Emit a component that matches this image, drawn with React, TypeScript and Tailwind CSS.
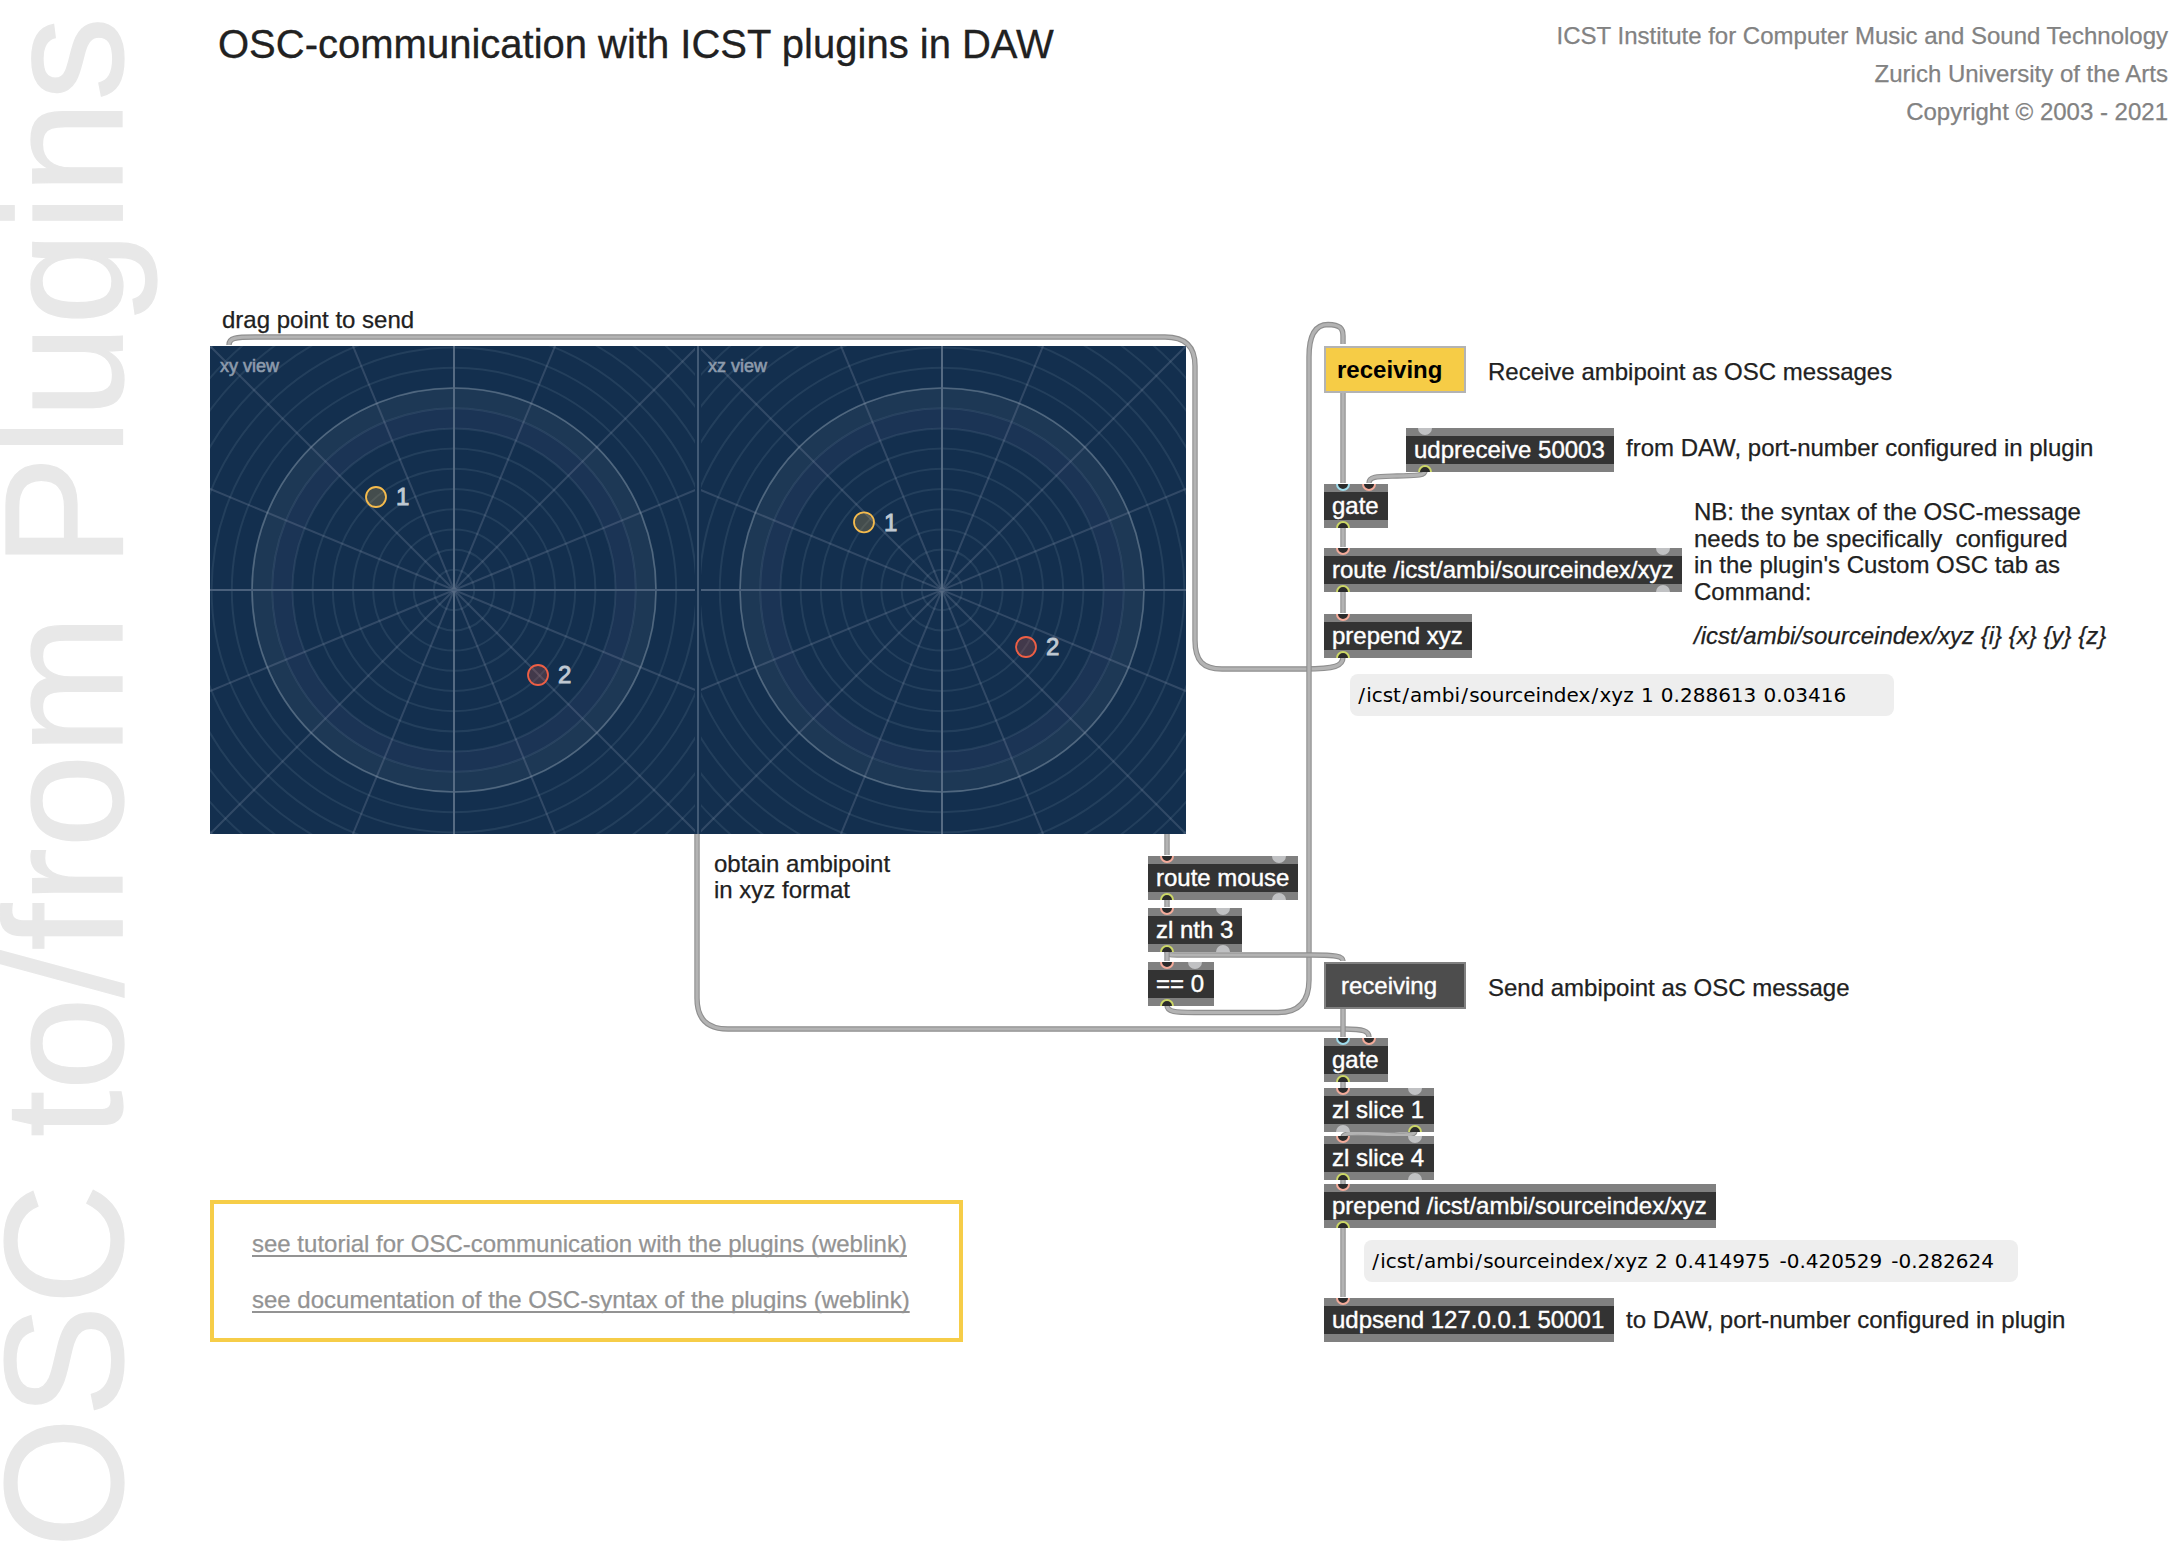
import React from "react";

type Tone = "hot" | "cold" | "out" | "idle";

const toneClass: Record<Tone, string> = {
  hot: "border-[#9fdcec] bg-[#2b2b2b]",
  cold: "border-[#f4ab9a] bg-[#2b2b2b]",
  out: "border-[#ccd766] bg-[#2b2b2b]",
  idle: "border-[#c0c1c3] bg-[#c0c1c3]",
};

function Port({ side, at, tone }: { side: "in" | "out"; at: "first" | "last"; tone: Tone }) {
  return (
    <span
      className={`absolute size-[14px] rounded-full border-2 ${toneClass[tone]} ${
        side === "in" ? "-top-[7px]" : "-bottom-[7px]"
      } ${at === "first" ? "left-[12px]" : "right-[12px]"}`}
    />
  );
}

interface ObjectBoxProps {
  label: string;
  place: string;
  ins?: Tone[];
  outs?: Tone[];
}

function ObjectBox({ label, place, ins = [], outs = [] }: ObjectBoxProps) {
  return (
    <div className={`absolute h-[44px] overflow-hidden bg-[#808080] py-2 ${place}`}>
      <div className="h-[28px] bg-[#333333] pl-[8px] text-[24px] leading-[28px] whitespace-pre text-white [-webkit-text-stroke:0.4px_white]">
        {label}
      </div>
      {ins.map((tone, i) => (
        <Port key={`i${i}`} side="in" at={i === 0 ? "first" : "last"} tone={tone} />
      ))}
      {outs.map((tone, i) => (
        <Port key={`o${i}`} side="out" at={i === 0 ? "first" : "last"} tone={tone} />
      ))}
    </div>
  );
}

function Note({ place, children }: { place: string; children: React.ReactNode }) {
  return (
    <p
      className={`absolute text-[24px] leading-[27px] whitespace-pre text-[#212121] [-webkit-text-stroke:0.25px_#212121] ${place}`}
    >
      {children}
    </p>
  );
}

function Monitor({ place, args }: { place: string; args: string[] }) {
  return (
    <div
      className={`absolute flex h-[42px] items-center rounded-lg bg-[#eeeeee] pl-[7px] font-['DejaVu_Sans',sans-serif] text-[20px] whitespace-pre text-black ${place}`}
    >
      {["icst", "ambi", "sourceindex", "xyz"].map((part) => (
        <React.Fragment key={part}>
          <span className="px-[1.2px]">/</span>
          <span>{part}</span>
        </React.Fragment>
      ))}
      {args.map((arg) => (
        <span key={arg} className={arg.startsWith("-") ? "pl-[2.8px]" : "pl-[0.9px]"}>
          {" " + arg}
        </span>
      ))}
    </div>
  );
}

const cables = [
  "M1343 657 C1343 666 1335 669 1305 669 H1222 C1203 669 1195 661 1195 640 V366 C1195 346 1185 337 1165 337 H255 C235 337 229 338 229 345",
  "M697 834 V998 C697 1019 707 1029 728 1029 H1345 C1363 1029 1369 1031 1369 1037",
  "M1167 1005 C1167 1012 1175 1012.5 1195 1012.5 H1278 C1299 1012.5 1309 1001 1309 980 V357 C1309 334 1316 324.5 1328 324.5 C1340 325 1343 328 1343 336 V344",
  "M1167 951 C1167 955 1170 955 1177 955 H1312 C1335 955 1343 956 1343 961",
  "M1167 951 V961",
  "M1167 834 V855",
  "M1343 392 V483",
  "M1425 471 C1425 476 1415 475.5 1397 476 C1378 476.5 1369 476 1369 483",
  "M1343 527 V547",
  "M1343 591 V613",
  "M1167 899 V907",
  "M1343 1007 V1037",
  "M1343 1081 V1088",
  "M1415 1131 C1415 1136 1405 1135.5 1379 1134 C1353 1132.5 1343 1133 1343 1137",
  "M1343 1179 V1184",
  "M1343 1227 V1297",
];

function Cables() {
  return (
    <svg className="pointer-events-none absolute inset-0" width="2178" height="1568" fill="none">
      {cables.map((d) => (
        <g key={d}>
          <path d={d} stroke="#8f8f8f" strokeWidth="5.4" />
          <path d={d} stroke="#b3b3b3" strokeWidth="3.2" />
        </g>
      ))}
    </svg>
  );
}

interface Source {
  id: number;
  x: number;
  y: number;
  color: string;
}

const rings = Array.from({ length: 17 }, (_, i) => (i + 1) * 20.2);
const spokes = [22.5, 45, 67.5, 112.5, 135, 157.5];

function AmbiView({ cx, left, title, sources }: { cx: number; left: number; title: string; sources: Source[] }) {
  const clip = `clip-${left}`;
  return (
    <g>
      <clipPath id={clip}>
        <rect x={left} y="0" width="485" height="488" />
      </clipPath>
      <g clipPath={`url(#${clip})`}>
        <circle cx={cx} cy="244" r="192" fill="none" stroke="#1d3855" strokeWidth="20.2" />
        <circle cx={cx} cy="244" r="171.7" fill="none" stroke="#1b3455" strokeWidth="20.2" />
        {rings.map((r) => (
          <circle key={r} cx={cx} cy="244" r={r} fill="none" stroke="#a0b4c8" strokeOpacity="0.12" strokeWidth="2" />
        ))}
        {spokes.map((a) => (
          <line
            key={a}
            x1={cx - 360}
            x2={cx + 360}
            y1="244"
            y2="244"
            transform={`rotate(${a} ${cx} 244)`}
            stroke="#a0aac0"
            strokeOpacity="0.22"
            strokeWidth="2"
          />
        ))}
        <circle cx={cx} cy="244" r="202" fill="none" stroke="#8c9db0" strokeOpacity="0.4" strokeWidth="1.6" />
        <line x1={cx} x2={cx} y1="0" y2="488" stroke="#566b83" strokeWidth="2" />
        <line x1={left} x2={left + 485} y1="244" y2="244" stroke="#4a607b" strokeWidth="2" />
      </g>
      <text x={left === 0 ? 10 : 498} y="26" fontSize="18" fill="#8d9bac" stroke="#8d9bac" strokeWidth="0.6">
        {title}
      </text>
      {sources.map((s) => (
        <g key={s.id}>
          <circle cx={s.x} cy={s.y} r="10" fill={s.color} fillOpacity="0.22" stroke={s.color} strokeWidth="1.8" />
          <text x={s.x + 20} y={s.y + 8.4} fontSize="24" fill="#c0c9d3" stroke="#c0c9d3" strokeWidth="0.9">
            {s.id}
          </text>
        </g>
      ))}
    </g>
  );
}

function AmbiMonitor() {
  return (
    <svg
      className="absolute top-[346px] left-[210px] bg-[#132f4e] font-['Liberation_Sans',Arial,sans-serif]"
      width="976"
      height="488"
    >
      <AmbiView
        cx={244}
        left={0}
        title="xy view"
        sources={[
          { id: 1, x: 166, y: 151, color: "#f5bb4d" },
          { id: 2, x: 328, y: 329, color: "#ee5f45" },
        ]}
      />
      <AmbiView
        cx={732}
        left={491}
        title="xz view"
        sources={[
          { id: 1, x: 654, y: 176.3, color: "#f5bb4d" },
          { id: 2, x: 816, y: 301, color: "#ee5f45" },
        ]}
      />
      <line x1="488" x2="488" y1="0" y2="488" stroke="#425a75" strokeWidth="2" />
    </svg>
  );
}

export default function App() {
  return (
    <main className="relative h-[1568px] w-[2178px] overflow-hidden bg-white font-['Liberation_Sans',Arial,sans-serif]">
      <div className="absolute top-[1548px] left-[1px] origin-top-left -rotate-90 text-[168px] leading-[126px] whitespace-nowrap text-[#e8e8e8] [-webkit-text-stroke:1.2px_#e8e8e8]">
        OSC to/from Plugins
      </div>

      <header className="flex items-start justify-between pt-[17px] pr-[10px] pl-[218px]">
        <h1 className="pt-[5px] text-[40px] leading-[45px] text-[#212121] [-webkit-text-stroke:0.3px_#212121]">
          OSC-communication with ICST plugins in DAW
        </h1>
        <div className="text-right text-[24px] leading-[38px] text-[#828282] [-webkit-text-stroke:0.25px_#828282]">
          <p>ICST Institute for Computer Music and Sound Technology</p>
          <p>Zurich University of the Arts</p>
          <p>Copyright © 2003 - 2021</p>
        </div>
      </header>

      <AmbiMonitor />
      <Cables />

      <Note place="left-[222px] top-[306px]">drag point to send</Note>
      <Note place="left-[714px] top-[850px]">
        <span className="block leading-[27px]">obtain ambipoint</span>
        <span className="block leading-[25px]">in xyz format</span>
      </Note>

      <div className="absolute top-[346px] left-[1324px] h-[47px] w-[142px] border-2 border-[#b3b3b3] bg-[#f6cc46] pl-[11px] text-[24px] leading-[44px] font-bold text-black">
        receiving
      </div>
      <Note place="left-[1488px] top-[358px]">Receive ambipoint as OSC messages</Note>
      <ObjectBox label="udpreceive 50003" place="left-[1406px] top-[428px] w-[208px]" ins={["idle"]} outs={["out"]} />
      <Note place="left-[1626px] top-[434px]">from DAW, port-number configured in plugin</Note>
      <ObjectBox label="gate" place="left-[1324px] top-[484px] w-[64px]" ins={["hot", "cold"]} outs={["out"]} />
      <ObjectBox
        label="route /icst/ambi/sourceindex/xyz"
        place="left-[1324px] top-[548px] w-[358px]"
        ins={["cold", "idle"]}
        outs={["out", "idle"]}
      />
      <ObjectBox label="prepend xyz" place="left-[1324px] top-[614px] w-[148px]" ins={["cold"]} outs={["out"]} />
      <div className="absolute top-[499px] left-[1694px] text-[24px] text-[#212121] [-webkit-text-stroke:0.25px_#212121]">
        <p className="leading-[26.7px] whitespace-pre">
          {"NB: the syntax of the OSC-message\nneeds to be specifically  configured\nin the plugin's Custom OSC tab as\nCommand:"}
        </p>
        <p className="pt-[16px] leading-[27px] italic">{"/icst/ambi/sourceindex/xyz {i} {x} {y} {z}"}</p>
      </div>
      <Monitor place="left-[1350px] top-[674px] w-[544px]" args={["1", "0.288613", "0.03416"]} />

      <ObjectBox
        label="route mouse"
        place="left-[1148px] top-[856px] w-[150px]"
        ins={["cold", "idle"]}
        outs={["out", "idle"]}
      />
      <ObjectBox
        label="zl nth 3"
        place="left-[1148px] top-[908px] w-[94px]"
        ins={["cold", "idle"]}
        outs={["out", "idle"]}
      />
      <ObjectBox label="== 0" place="left-[1148px] top-[962px] w-[66px]" ins={["cold", "idle"]} outs={["out"]} />

      <div className="absolute top-[962px] left-[1324px] h-[47px] w-[142px] border-2 border-[#808080] bg-[#4d4d4d] pl-[15px] text-[24px] leading-[44px] text-white [-webkit-text-stroke:0.4px_white]">
        receiving
      </div>
      <Note place="left-[1488px] top-[974px]">Send ambipoint as OSC message</Note>
      <ObjectBox label="gate" place="left-[1324px] top-[1038px] w-[64px]" ins={["hot", "cold"]} outs={["out"]} />
      <ObjectBox
        label="zl slice 1"
        place="left-[1324px] top-[1088px] w-[110px]"
        ins={["cold", "idle"]}
        outs={["idle", "out"]}
      />
      <ObjectBox
        label="zl slice 4"
        place="left-[1324px] top-[1136px] w-[110px]"
        ins={["cold", "idle"]}
        outs={["out", "idle"]}
      />
      <ObjectBox
        label="prepend /icst/ambi/sourceindex/xyz"
        place="left-[1324px] top-[1184px] w-[392px]"
        ins={["cold"]}
        outs={["out"]}
      />
      <Monitor
        place="left-[1364px] top-[1240px] w-[654px]"
        args={["2", "0.414975", "-0.420529", "-0.282624"]}
      />
      <ObjectBox label="udpsend 127.0.0.1 50001" place="left-[1324px] top-[1298px] w-[290px]" ins={["cold"]} />
      <Note place="left-[1626px] top-[1306px]">to DAW, port-number configured in plugin</Note>

      <nav className="absolute top-[1200px] left-[210px] flex h-[142px] w-[753px] flex-col items-start gap-[29px] border-4 border-[#f6cd48] pt-[26px] pl-[38px] text-[24px] leading-[27px] text-[#939393] [-webkit-text-stroke:0.25px_#939393]">
        <a className="underline decoration-2 underline-offset-[3px] [text-decoration-skip-ink:none]">
          see tutorial for OSC-communication with the plugins (weblink)
        </a>
        <a className="underline decoration-2 underline-offset-[3px] [text-decoration-skip-ink:none]">
          see documentation of the OSC-syntax of the plugins (weblink)
        </a>
      </nav>
    </main>
  );
}
